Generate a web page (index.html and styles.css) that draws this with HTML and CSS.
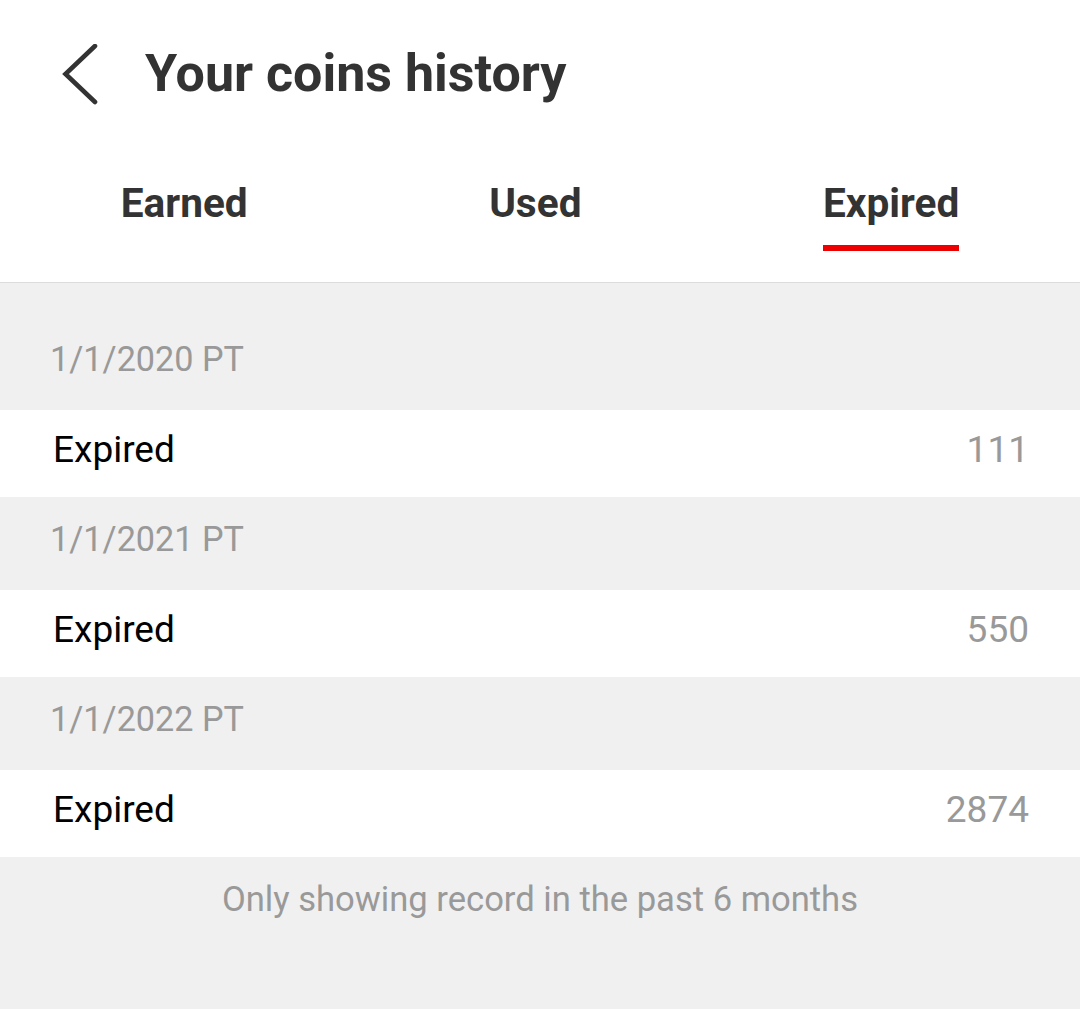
FILE: index.html
```html
<!DOCTYPE html>
<html lang="en">
<head>
<meta charset="utf-8">
<title>Your coins history</title>
<link rel="stylesheet" href="styles.css">
</head>
<body>
<div class="page">
  <header class="topbar">
    <button class="back" aria-label="Back">
      <svg width="40" height="64" viewBox="0 0 40 64" aria-hidden="true">
        <polyline points="35,2 5.5,30 35,58" fill="none" stroke="#333" stroke-width="4.6" stroke-linecap="round" stroke-linejoin="miter"/>
      </svg>
    </button>
    <h1 class="title">Your coins history</h1>
  </header>
  <nav class="tabs">
    <div class="tab">Earned</div>
    <div class="tab">Used</div>
    <div class="tab tab-active">Expired</div>
  </nav>
  <main class="list">
    <div class="date">1/1/2020 PT</div>
    <div class="row"><span class="label">Expired</span><span class="amount">111</span></div>
    <div class="date">1/1/2021 PT</div>
    <div class="row"><span class="label">Expired</span><span class="amount">550</span></div>
    <div class="date">1/1/2022 PT</div>
    <div class="row"><span class="label">Expired</span><span class="amount">2874</span></div>
    <p class="note">Only showing record in the past 6 months</p>
  </main>
</div>
</body>
</html>
```
FILE: styles.css
```css
* { box-sizing: border-box; }
html, body { margin: 0; padding: 0; background: #f0f0f0; }
body { font-family: Roboto, "Liberation Sans", Arial, sans-serif; }

.page { width: 1080px; min-height: 1009px; background: #f0f0f0; }

.topbar {
  background: #fff;
  height: 150px;
  display: flex;
  align-items: flex-start;
  padding: 44px 0 0 60px;
}
.back {
  border: 0;
  background: none;
  padding: 0;
  width: 40px;
  height: 64px;
  display: block;
}
.back svg { display: block; }
.title {
  margin: 0 0 0 45px;
  font-size: 52px;
  line-height: 60px;
  font-weight: 700;
  color: #333;
}

.tabs {
  background: #fff;
  display: flex;
  justify-content: space-around;
  padding: 29px 0 31px;
  border-bottom: 1px solid #dcdcdc;
}
.tab {
  font-size: 40.6px;
  line-height: 48px;
  font-weight: 700;
  color: #333;
  display: flex;
  flex-direction: column;
}
.tab::after {
  content: "";
  display: block;
  height: 6px;
  margin-top: 18px;
  background: transparent;
}
.tab-active::after { background: #ee0000; }

.list { padding-top: 34px; }
.date {
  padding: 21px 50px 30px;
  font-size: 34.2px;
  line-height: 42px;
  color: #999;
}
.row {
  background: #fff;
  display: flex;
  justify-content: space-between;
  padding: 18px 51px 25px 53px;
  font-size: 37px;
  line-height: 44px;
}
.label { color: #000; }
.amount { color: #999; }
.note {
  margin: 0;
  padding: 22px 0 0;
  text-align: center;
  font-size: 34.6px;
  line-height: 40px;
  color: #999;
}
```
